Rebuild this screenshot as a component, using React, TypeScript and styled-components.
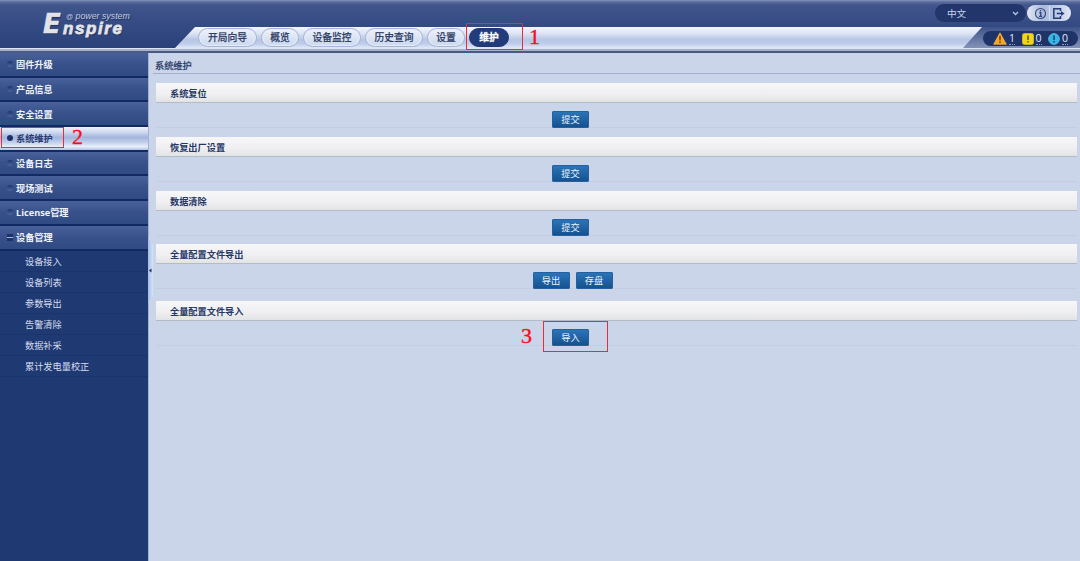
import styled, { createGlobalStyle, css } from "styled-components";

const tabs = [
  { label: "开局向导", width: 59 },
  { label: "概览", width: 38 },
  { label: "设备监控", width: 58 },
  { label: "历史查询", width: 58 },
  { label: "设置", width: 38 },
  { label: "维护", width: 40, active: true },
];

const menu = [
  "固件升级",
  "产品信息",
  "安全设置",
  "系统维护",
  "设备日志",
  "现场测试",
  "License管理",
  "设备管理",
];

const submenu = ["设备接入", "设备列表", "参数导出", "告警清除", "数据补采", "累计发电量校正"];

const sections = [
  { title: "系统复位", actions: ["提交"], height: 53.8 },
  { title: "恢复出厂设置", actions: ["提交"], height: 53.8 },
  { title: "数据清除", actions: ["提交"], height: 53.4 },
  { title: "全量配置文件导出", actions: ["导出", "存盘"], height: 56.4 },
  { title: "全量配置文件导入", actions: ["导入"], height: 53.8 },
];

export default function App() {
  return (
    <Page>
      <GlobalStyle />
      <Header>
        <Logo>
          <LogoInitial>E</LogoInitial>
          <LogoText>
            <LogoTag>
              <small>@</small> power system
            </LogoTag>
            <LogoName>nspire</LogoName>
          </LogoText>
        </Logo>
        <HeaderMain>
          <TopRow>
            <Language>
              中文
              <svg width="7" height="5" viewBox="0 0 7 5">
                <path d="M1 1l2.5 2.5L6 1" fill="none" stroke="#b9c6e4" strokeWidth="1.3" />
              </svg>
            </Language>
            <Tools>
              <InfoIcon />
              <ToolSeparator />
              <ExitIcon />
            </Tools>
          </TopRow>
          <Strip>
            <Nav>
              {tabs.map((tab) => (
                <Tab key={tab.label} $width={tab.width} $active={tab.active}>
                  {tab.label}
                </Tab>
              ))}
            </Nav>
            <AlarmArea>
              <Alarms>
                <MajorIcon />
                <Count>1</Count>
                <MinorIcon />
                <Count>0</Count>
                <WarningIcon />
                <Count>0</Count>
              </Alarms>
            </AlarmArea>
          </Strip>
        </HeaderMain>
      </Header>
      <Divider />
      <Body>
        <Sidebar>
          {menu.map((label) => (
            <MenuItem key={label} $active={label === "系统维护"}>
              {label === "设备管理" ? <Collapse /> : <Bullet $active={label === "系统维护"} />}
              {label}
            </MenuItem>
          ))}
          {submenu.map((label) => (
            <SubItem key={label}>{label}</SubItem>
          ))}
        </Sidebar>
        <Gutter>
          <Handle>
            <svg width="4" height="5" viewBox="0 0 4 5">
              <path d="M3.5 0.5v4L0.8 2.5z" fill="#27355f" />
            </svg>
          </Handle>
        </Gutter>
        <Content>
          <Title>系统维护</Title>
          {sections.map((section) => (
            <Section key={section.title} $height={section.height}>
              <SectionHeader>{section.title}</SectionHeader>
              <Actions>
                {section.actions.map((action) => (
                  <Button key={action}>{action}</Button>
                ))}
              </Actions>
            </Section>
          ))}
        </Content>
      </Body>
      <Outline $x={466} $y={23} $width={57} $height={27} />
      <Outline $x={1} $y={127} $width={63} $height={21} />
      <Outline $x={543} $y={321} $width={65} $height={31} />
      <Step $x={529} $y={26}>1</Step>
      <Step $x={72} $y={126}>2</Step>
      <Step $x={521} $y={325}>3</Step>
    </Page>
  );
}

function InfoIcon() {
  return (
    <svg width="13" height="13" viewBox="0 0 13 13">
      <circle cx="6.5" cy="6.5" r="5" fill="none" stroke="#33487f" strokeWidth="1.1" />
      <path d="M6.5 3v1.4M5.3 5.7h1.4v3.4M5 9.4h3.2" fill="none" stroke="#33487f" strokeWidth="1.4" />
    </svg>
  );
}

function ExitIcon() {
  return (
    <svg width="13" height="13" viewBox="0 0 13 13">
      <path d="M8.5 4V1.8H1.8v9.4h6.700V9" fill="none" stroke="#263c77" strokeWidth="1.5" />
      <path d="M4.800 6.500h5" fill="none" stroke="#263c77" strokeWidth="1.600" />
      <path d="M9 3.900l3.500 2.600L9 9.100z" fill="#263c77" />
    </svg>
  );
}

function MajorIcon() {
  return (
    <svg width="14" height="13" viewBox="0 0 14 13">
      <path
        d="M7 0.800L13.400 12.300H0.600z"
        fill="#ffa51c"
        stroke="#f7b23c"
        strokeWidth="0.700"
        strokeLinejoin="round"
      />
      <path d="M7 4v4.500M7 9.500v1.400" stroke="#5c3906" strokeWidth="1.400" />
    </svg>
  );
}

function MinorIcon() {
  return (
    <svg width="12" height="12" viewBox="0 0 12 12">
      <rect x="0.500" y="0.500" width="11" height="11" rx="2" fill="#f0d51b" stroke="#c9b524" />
      <path d="M6 2.500v4.500M6 8v1.400" stroke="#51470d" strokeWidth="1.400" />
    </svg>
  );
}

function WarningIcon() {
  return (
    <svg width="12" height="12" viewBox="0 0 12 12">
      <circle cx="6" cy="6" r="5.400" fill="#35b5e5" stroke="#57c8ee" strokeWidth="0.800" />
      <path d="M6 2.500v4.500M6 8v1.400" stroke="#103b62" strokeWidth="1.400" />
    </svg>
  );
}

const GlobalStyle = createGlobalStyle`
  body {
    margin: 0;
    overflow: hidden;
    font-family: "Open Sans", "Noto Sans CJK SC", sans-serif;
    font-size: 9.2px;
  }

  svg {
    display: block;
    flex: none;
  }
`;

const Page = styled.div`
  position: relative;
  display: flex;
  flex-direction: column;
  width: 1080px;
  height: 561px;
  overflow: hidden;
  background: #cad5ea;
`;

const Header = styled.header`
  display: flex;
  height: 48px;
  background: linear-gradient(#8795b9 0, #5a6c9e 2px, #41558c 5px, #354b84 50%, #2b4179 100%);
`;

const Logo = styled.div`
  display: flex;
  width: 175px;
  padding: 12px 0 0 43px;
  box-sizing: border-box;
  color: #e2e3e9;
  font-family: "DejaVu Sans", sans-serif;
  font-style: italic;
  white-space: nowrap;
  text-shadow: 1px 1px 1px #1c2d5b;
`;

const LogoInitial = styled.div`
  width: 20px;
  font-size: 26px;
  font-weight: bold;
  line-height: 24px;
  -webkit-text-stroke: 0.5px #e2e3e9;
`;

const LogoText = styled.div`
  display: flex;
  flex-direction: column;
`;

const LogoTag = styled.div`
  height: 9px;
  padding-left: 3px;
  color: #c3cce0;
  font-family: "Liberation Sans", sans-serif;
  font-size: 8.8px;
  line-height: 9px;

  small {
    font-size: 7px;
  }
`;

const LogoName = styled.div`
  height: 15px;
  font-family: "Liberation Sans", sans-serif;
  font-size: 17px;
  font-weight: bold;
  letter-spacing: 1.6px;
  line-height: 16px;
  -webkit-text-stroke: 0.8px #e2e3e9;
`;

const HeaderMain = styled.div`
  display: flex;
  flex: 1;
  flex-direction: column;
`;

const TopRow = styled.div`
  display: flex;
  justify-content: flex-end;
  align-items: flex-start;
  gap: 1px;
  height: 27px;
  padding: 4px 9px 0 0;
  box-sizing: border-box;
`;

const Language = styled.div`
  display: flex;
  justify-content: space-between;
  align-items: center;
  width: 91px;
  height: 18px;
  padding: 0 7px 0 12px;
  box-sizing: border-box;
  border-radius: 9px;
  background: #22366c;
  color: #c9d3e9;
  font-size: 9.6px;
`;

const Tools = styled.div`
  display: flex;
  justify-content: center;
  align-items: center;
  gap: 2px;
  width: 44px;
  height: 16px;
  margin-top: 1px;
  border-radius: 8px;
  background: linear-gradient(90deg, #e3e9f6, #a9b9dc 35%, #bfcce7 70%, #e3e9f6);
`;

const ToolSeparator = styled.i`
  width: 1px;
  height: 14px;
  background: #d9e2f3;
`;

const Strip = styled.div`
  display: flex;
  height: 21px;
  clip-path: polygon(20px 0, 100% 0, 100% 100%, 0 100%);
  background: linear-gradient(#f3f6fc 0, #dde5f4 30%, #b7c6e5 60%, #bfcdea 80%, #e0e8f7 100%);
`;

const Nav = styled.nav`
  display: flex;
  flex: 1;
  align-items: center;
  gap: 4px;
  padding-left: 23px;
`;

const Tab = styled.div<{ $width: number; $active?: boolean }>`
  width: ${({ $width }) => $width}px;
  height: 19px;
  box-sizing: border-box;
  border: 1px solid #a5b4d3;
  border-radius: 10px;
  background: linear-gradient(#edf2fb, #cbd8ef);
  box-shadow: inset 0 0 1px 1px #e7edf8;
  color: #27355c;
  font-size: 9.8px;
  line-height: 18px;
  text-align: center;
  -webkit-text-stroke: 0.25px currentColor;

  ${({ $active }) =>
    $active &&
    css`
      border-color: #1f3672;
      background: #223b7b;
      box-shadow: none;
      color: #fff;
      font-weight: 700;
    `}
`;

const AlarmArea = styled.div`
  display: flex;
  justify-content: flex-end;
  align-items: center;
  width: 117px;
  padding: 2px 2px 0 0;
  box-sizing: border-box;
  clip-path: polygon(19px 0, 100% 0, 100% 100%, 0 100%);
  background: linear-gradient(#3e5288, #8492b7);
`;

const Alarms = styled.div`
  display: flex;
  align-items: center;
  width: 95px;
  height: 15px;
  padding-left: 10px;
  box-sizing: border-box;
  border-radius: 8px;
  background: #1e3468;
`;

const Count = styled.span`
  width: 6px;
  height: 12px;
  margin: 0 6.500px 0 2px;
  border-bottom: 1px dotted #8c9bc0;
  color: #e2e8f5;
  font-size: 10.5px;
  line-height: 12px;
`;

const Divider = styled.div`
  height: 5px;
  background: linear-gradient(#dfe5f1 0 1px, #a6b1cb 1px 3px, #4b5880 3px 5px);
`;

const Body = styled.div`
  display: flex;
  flex: 1;
  min-height: 0;
`;

const Sidebar = styled.aside`
  width: 148px;
  background: #1f3973;
`;

const MenuItem = styled.div<{ $active: boolean }>`
  display: flex;
  align-items: center;
  gap: 3px;
  height: 24.7px;
  padding-left: 7px;
  box-sizing: border-box;
  border-bottom: 2px solid #122961;
  background: linear-gradient(#48619a, #38518b 50%, #304a84);
  color: #f0f3fa;
  font-weight: 700;

  ${({ $active }) =>
    $active &&
    css`
      background: linear-gradient(#eef3fc 0, #d2ddf1 20%, #a3b5dc 45%, #bfcdea 65%, #e8effb 85%, #b1c1e0 100%);
      color: #273a70;
    `}
`;

const Bullet = styled.i<{ $active: boolean }>`
  width: 6px;
  height: 6px;
  border-radius: 50%;
  background: ${({ $active }) => ($active ? "#1c3168" : "linear-gradient(#1d3467, #4d67a0)")};
`;

const Collapse = styled.i`
  width: 6px;
  height: 7px;
  background: linear-gradient(#1c3265 0 3px, #a7b7d9 3px 4px, #1c3265 4px);
`;

const SubItem = styled.div`
  height: 21.1px;
  padding-left: 25px;
  box-sizing: border-box;
  border-bottom: 1px solid #1b356c;
  color: #d6deef;
  line-height: 22px;
`;

const Gutter = styled.div`
  display: flex;
  align-items: flex-start;
  width: 5px;
  padding-top: 184px;
  box-sizing: border-box;
  background: linear-gradient(90deg, #a4b1d0 0 1px, transparent 1px);
`;

const Handle = styled.div`
  display: flex;
  align-items: center;
  width: 5px;
  height: 66px;
  clip-path: polygon(0 0, 100% 8px, 100% 58px, 0 100%);
  background: linear-gradient(90deg, #a4bde4, #d5e5fa);
`;

const Content = styled.main`
  flex: 1;
  padding-right: 3px;
`;

const Title = styled.div`
  height: 21px;
  margin: 0 -3px 9.4px 0;
  padding-left: 2px;
  box-sizing: border-box;
  border-bottom: 1px solid #a1afca;
  color: #263765;
  line-height: 25px;
  -webkit-text-stroke: 0.25px currentColor;
`;

const Section = styled.section<{ $height: number }>`
  height: ${({ $height }) => $height}px;
  margin-left: 3px;
`;

const SectionHeader = styled.div`
  height: 20px;
  padding-left: 14px;
  box-sizing: border-box;
  border-bottom: 1px solid #b4bac6;
  background: linear-gradient(#f7f7fa, #efeff2 60%, #e2e3e5);
  color: #263765;
  font-weight: 700;
  line-height: 22px;
`;

const Actions = styled.div`
  display: flex;
  justify-content: center;
  gap: 6px;
  height: 25px;
  padding: 8px 92px 0 0;
  box-sizing: border-box;
  border-bottom: 1px solid #c3cee3;

  &:has(button + button) {
    padding-right: 88px;
  }
`;

const Button = styled.button`
  width: 37px;
  height: 17px;
  padding: 0;
  border: 1px solid #2561a0;
  border-radius: 1px;
  background: linear-gradient(#2b74b8, #15528f);
  color: #eef4fb;
  font: inherit;
  line-height: 15px;
`;

const Outline = styled.div<{ $x: number; $y: number; $width: number; $height: number }>`
  position: absolute;
  left: ${({ $x }) => $x}px;
  top: ${({ $y }) => $y}px;
  width: ${({ $width }) => $width}px;
  height: ${({ $height }) => $height}px;
  box-sizing: border-box;
  border: 1px solid #ee2a38;
`;

const Step = styled.div<{ $x: number; $y: number }>`
  position: absolute;
  left: ${({ $x }) => $x}px;
  top: ${({ $y }) => $y}px;
  color: #f5101c;
  font-family: "Liberation Serif", serif;
  font-size: 22px;
  line-height: 22px;
  -webkit-text-stroke: 0.4px #f5101c;
`;
